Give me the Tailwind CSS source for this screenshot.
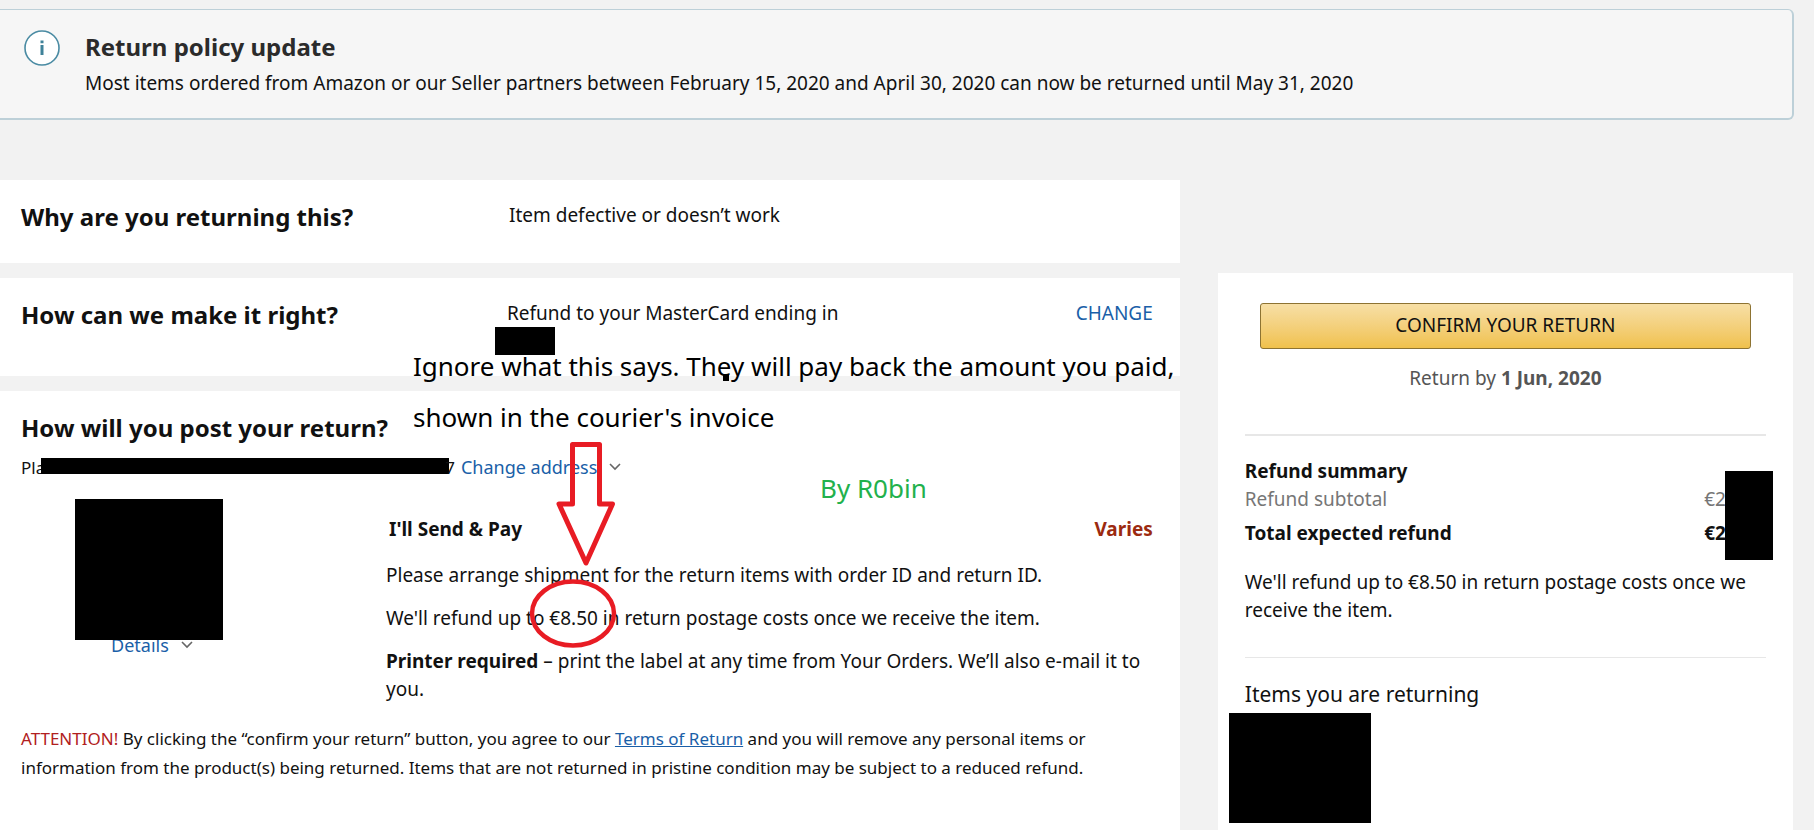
<!DOCTYPE html>
<html lang="en">
<head>
    <meta charset="UTF-8">
    <meta name="viewport" content="width=device-width, initial-scale=1.0">
    <title>Confirm your return</title>
    <script src="https://cdn.jsdelivr.net/npm/@tailwindcss/browser@4"></script>
</head>
<body class="flex flex-col min-h-screen bg-[#f2f2f2] text-[#111] text-[19px] leading-[28px] font-['Noto_Sans','Open_Sans',sans-serif]">

    <!-- Policy banner -->
    <section class="flex mt-[9px] mr-5 pt-5 pb-[21px] px-6 bg-[#f6f6f6] border-t border-r-2 border-b-2 border-[#bdd0d8] rounded-r-md">
        <svg class="w-9 h-9 mr-[25px] shrink-0" viewBox="0 0 36 36" fill="none">
            <circle cx="18" cy="18" r="17" fill="#fff" stroke="#4a8ba3" stroke-width="1.6"/>
            <path d="M16.500 10.500h3v2.800h-3zM16.500 15h3v10h-3z" fill="#3f8299"/>
        </svg>
        <div class="pt-px">
            <h2 class="text-[24px] leading-[32px] font-bold text-[#2b2b2b]">Return policy update</h2>
            <p class="mt-1.5">Most items ordered from Amazon or our Seller partners between February 15, 2020 and April 30, 2020 can now be returned until May 31, 2020</p>
        </div>
    </section>

    <div class="flex flex-1 mt-[60px] mr-[21px]">
        <!-- Return options -->
        <main class="relative flex flex-col gap-[15px] w-[65.8%]">
            <section class="flex pt-[21px] pb-[30px] pl-[21px] pr-[27px] bg-white">
                <h2 class="w-[488px] text-[24px] leading-[32px] font-bold">Why are you returning this?</h2>
                <p>Item defective or doesn’t work</p>
            </section>

            <section class="flex py-[21px] pl-[21px] pr-[27px] bg-white">
                <h2 class="w-[486px] text-[24px] leading-[32px] font-bold">How can we make it right?</h2>
                <div class="flex-1">
                    <p>Refund to your MasterCard ending in</p>
                    <div class="w-[60px] h-7 -ml-3 bg-black"></div>
                </div>
                <a href="#" class="text-[#1a5fa8]">CHANGE</a>
            </section>

            <section class="flex-1 pt-[21px] pb-6 pl-[21px] pr-[27px] bg-white">
                <h2 class="text-[24px] leading-[32px] font-bold">How will you post your return?</h2>
                <div class="flex items-baseline mt-[9px]">
                    <span class="text-[17px]">Pla</span>
                    <span class="w-[408px] h-4 -ml-1 bg-black"></span>
                    <span class="-ml-1 text-[17px]">7</span>
                    <a href="#" class="ml-1.5 text-[18px] text-[#1a5fa8]">Change address</a>
                    <svg class="w-3 h-3 ml-3" viewBox="0 0 12 12" fill="none" stroke="#666" stroke-width="1.6"><path d="M1 2l5 5 5-5"/></svg>
                </div>

                <div class="flex mt-[17px]">
                    <div class="w-[365px] shrink-0">
                        <div class="relative w-[148px] h-[141px] ml-[54px] bg-black"></div>
                        <a href="#" class="flex items-center gap-3 -mt-[9px] ml-[90px] text-[18px] text-[#1a5fa8]">Details
                            <svg class="w-3 h-3" viewBox="0 0 12 12" fill="none" stroke="#666" stroke-width="1.6"><path d="M1 3l5 5 5-5"/></svg>
                        </a>
                    </div>
                    <div class="flex-1 pt-4">
                        <div class="flex justify-between pl-[3px] font-bold">
                            <h3>I'll Send &amp; Pay</h3>
                            <span class="text-[#9c2a10]">Varies</span>
                        </div>
                        <p class="mt-[18px]">Please arrange shipment for the return items with order ID and return ID.</p>
                        <p class="mt-[15px]">We'll refund up to €8.50 in return postage costs once we receive the item.</p>
                        <p class="mt-[15px]"><b>Printer required</b> – print the label at any time from Your Orders. We’ll also e-mail it to you.</p>
                    </div>
                </div>

                <p class="mt-[21px] text-[17px] leading-[29px]"><span class="text-[#b12020]">ATTENTION!</span> By clicking the “confirm your return” button, you agree to our <a href="#" class="text-[#1a5fa8] underline">Terms of Return</a> and you will remove any personal items or information from the product(s) being returned. Items that are not returned in pristine condition may be subject to a reduced refund.</p>
            </section>

            <!-- Notes drawn over the page -->
            <p class="absolute top-[161px] left-[413px] text-[26px] leading-[51px] text-black whitespace-nowrap">Ignore what this says. They will pay back the amount you paid,<br>shown in the courier's invoice</p>
            <div class="absolute top-[194px] left-[723px] w-1.5 h-[7px] bg-black"></div>
            <p class="absolute top-[292px] left-[820px] text-[26px] leading-[32px] text-[#22b14c] whitespace-nowrap">By R0bin</p>
            <svg class="absolute top-[260px] left-[527px] w-[92px] h-[212px]" viewBox="0 0 92 212" fill="none" stroke="#e81c24" stroke-linejoin="round">
                <path d="M45.500 4.500h27v59.500h13L59 123 32 64h13.500z" stroke-width="5"/>
                <ellipse cx="46" cy="173.500" rx="41" ry="32" stroke-width="4.500"/>
            </svg>
        </main>

        <!-- Refund summary -->
        <aside class="relative flex-1 mt-[93px] ml-[38px] pt-[30px] px-[27px] bg-white">
            <div class="px-[15px]">
                <button type="button" class="block w-full h-[46px] pb-0.5 border border-[#8d7332] rounded-[3px] bg-linear-to-b from-[#f7dfa5] to-[#f0c14b]">CONFIRM YOUR RETURN</button>
            </div>
            <p class="mt-[15px] text-center text-[#555]">Return by <b>1 Jun, 2020</b></p>
            <hr class="mt-[42px] border-t-2 border-[#e7e7e7]">
            <h3 class="mt-[21px] font-bold">Refund summary</h3>
            <div class="flex justify-between pr-10 text-[#767676]">
                <span>Refund subtotal</span>
                <span>€2</span>
            </div>
            <div class="flex justify-between mt-1.5 pr-10 font-bold">
                <span>Total expected refund</span>
                <span>€2</span>
            </div>
            <div class="absolute top-[198px] right-5 w-12 h-[89px] bg-black"></div>
            <p class="mt-[21px]">We'll refund up to €8.50 in return postage costs once we receive the item.</p>
            <hr class="mt-[33px] border-[#e7e7e7]">
            <h3 class="mt-[22px] text-[21px]">Items you are returning</h3>
            <div class="w-[142px] h-[110px] mt-[5px] -ml-4 bg-black"></div>
        </aside>
    </div>
</body>
</html>
